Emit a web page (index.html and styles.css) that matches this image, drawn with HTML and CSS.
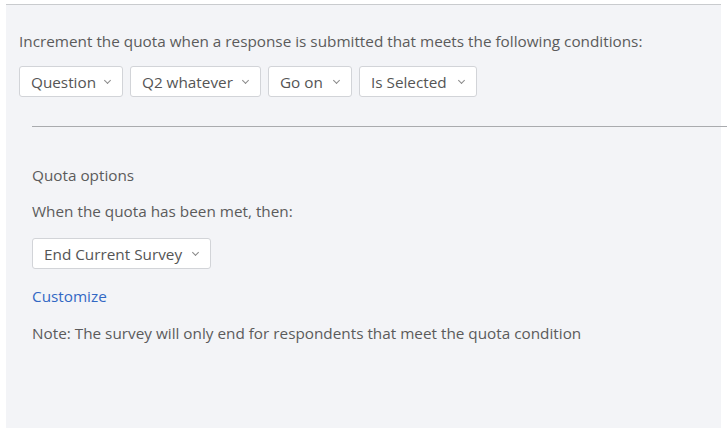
FILE: index.html
```html
<!DOCTYPE html>
<html>
<head>
<meta charset="utf-8">
<link rel="stylesheet" href="styles.css">
</head>
<body>
<div class="panel">
  <div class="conditions">
    <p class="intro">Increment the quota when a response is submitted that meets the following conditions:</p>
    <div class="row">
      <div class="select w-question">Question <span class="chev"></span></div>
      <div class="select w-q2">Q2 whatever <span class="chev"></span></div>
      <div class="select w-goon">Go on <span class="chev"></span></div>
      <div class="select w-sel">Is Selected <span class="chev"></span></div>
    </div>
  </div>
  <div class="divider"></div>
  <div class="options">
    <p class="label">Quota options</p>
    <p class="label when">When the quota has been met, then:</p>
    <div class="select w-end">End Current Survey <span class="chev"></span></div>
    <a class="link">Customize</a>
    <p class="label note">Note: The survey will only end for respondents that meet the quota condition</p>
  </div>
</div>
</body>
</html>
```
FILE: styles.css
```css
html, body { margin: 0; padding: 0; background: #ffffff; }
body {
  font-family: "Open Sans", "Liberation Sans", sans-serif;
  font-size: 15.3px;
  color: #5b5b5b;
  width: 727px;
  height: 428px;
  overflow: hidden;
}
.panel {
  margin: 4px 0 0 6px;
  width: 715px;
  height: 424px;
  background: #f3f4f7;
  border-top: 1px solid #c9cbce;
  box-sizing: border-box;
}
.conditions { padding: 26px 0 0 13px; }
.intro { margin: 0; line-height: 20px; }
.row { display: flex; gap: 7px; margin-top: 15px; }
.select {
  display: flex;
  align-items: center;
  justify-content: space-between;
  box-sizing: border-box;
  height: 31px;
  padding: 0 12px 0 11px;
  background: #ffffff;
  border: 1px solid #d2d4d8;
  border-radius: 3px;
  color: #555;
  white-space: nowrap;
}
.chev {
  display: inline-block;
  width: 4px;
  height: 4px;
  border-right: 1px solid #8a8a8a;
  border-bottom: 1px solid #8a8a8a;
  transform: rotate(45deg);
  margin: -3px 0 0 6px;
}
.w-question { width: 104px; }
.w-q2 { width: 131px; }
.w-goon { width: 84px; }
.w-sel { width: 118px; }
.w-end { width: 179px; }
.divider {
  margin: 29px 0 0 26px;
  height: 1px;
  background: #a9abae;
  width: 700px;
}
.options { padding: 38px 0 0 26px; }
.label { margin: 0; line-height: 20px; }
.when { margin-top: 16px; }
.options .select { margin-top: 17px; }
.link { display: block; margin-top: 17px; color: #3268c4; line-height: 20px; }
.note { margin-top: 17px; }
```
